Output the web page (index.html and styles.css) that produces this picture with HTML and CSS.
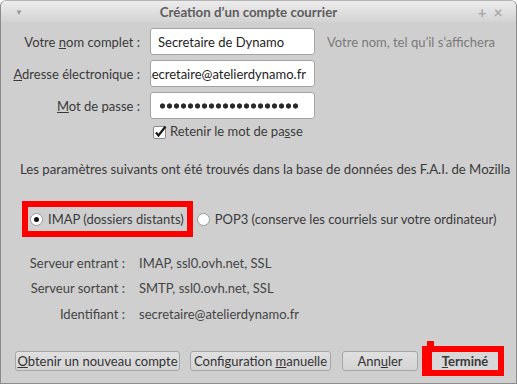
FILE: index.html
```html
<!DOCTYPE html>
<html lang="fr">
<head>
    <meta charset="UTF-8">
    <title>Création d’un compte courrier</title>
    <link rel="stylesheet" href="styles.css">
</head>
<body>
    <div class="window">
        <!-- Title bar -->
        <div class="titlebar">
            <span class="menu-arrow">&#9660;</span>
            <span class="title">Création d’un compte courrier</span>
            <span class="win-btn">+</span>
            <span class="win-btn">&#215;</span>
        </div>

        <div class="content">
            <!-- Identity fields -->
            <div class="fields">
                <label>Votre <u>n</u>om complet :</label>
                <div class="field">Secretaire de Dynamo</div>
                <span class="hint">Votre nom, tel qu’il s’affichera</span>

                <label><u>A</u>dresse électronique :</label>
                <div class="field field-scrolled"><span>secretaire@atelierdynamo.fr</span></div>
                <span></span>

                <label><u>M</u>ot de passe :</label>
                <div class="field"><span class="dots"></span></div>
                <span></span>
            </div>

            <div class="remember">
                <svg class="checkbox" width="15" height="15" viewBox="0 0 15 15">
                    <rect x="0.5" y="2.5" width="12" height="12" rx="1.5" fill="#fff" stroke="#8a8a8a"/>
                    <path d="M3 8.5 L5.5 11.5 L12.5 2.5" fill="none" stroke="#1a1a1a" stroke-width="2.2"/>
                </svg>
                <span>Retenir le mot de pa<u>s</u>se</span>
            </div>

            <p class="notice">Les paramètres suivants ont été trouvés dans la base de données des F.A.I. de Mozilla</p>

            <!-- Protocol choice -->
            <div class="protocols">
                <div class="highlight">
                    <span class="radio checked"></span>
                    <span>IMAP (dossiers distants)</span>
                </div>
                <span class="radio"></span>
                <span>POP3 (conserve les courriels sur votre ordinateur)</span>
            </div>

            <!-- Server summary -->
            <div class="servers">
                <span class="key">Serveur entrant :</span>
                <span>IMAP, ssl0.ovh.net, SSL</span>
                <span class="key">Serveur sortant :</span>
                <span>SMTP, ssl0.ovh.net, SSL</span>
                <span class="key">Identifiant :</span>
                <span>secretaire@atelierdynamo.fr</span>
            </div>

            <!-- Dialog buttons -->
            <div class="buttons">
                <button class="btn btn-new"><u>O</u>btenir un nouveau compte</button>
                <button class="btn btn-manual">Configuration <u>m</u>anuelle</button>
                <button class="btn btn-cancel">Ann<u>u</u>ler</button>
                <div class="highlight highlight-done">
                    <button class="btn btn-done"><u>T</u>erminé</button>
                </div>
            </div>
        </div>
    </div>
</body>
</html>
```

FILE: styles.css
```css
/* General Styling */
body {
    margin: 0;
    padding: 0;
    font-family: 'Lato', 'Liberation Sans', sans-serif;
    font-size: 13px;
    color: #3a3a3a;
}

.window {
    width: 517px;
    height: 384px;
    box-sizing: border-box;
    border: 1px solid #8c8c8c;
    border-top-color: #b4b4b4;
    border-radius: 6px 6px 0 0;
    background: #cfcfcf;
    overflow: hidden;
    display: flex;
    flex-direction: column;
}

/* Title bar */
.titlebar {
    height: 21px;
    display: flex;
    align-items: center;
    padding: 0 10px 0 14px;
    background: linear-gradient(#ececec, #d3d3d3);
}

.menu-arrow {
    font-size: 8px;
    color: #9a9a9a;
    width: 28px;
}

.title {
    flex: 1;
    text-align: center;
    font-weight: bold;
    font-size: 13.3px;
    color: #5c5c5c;
    padding-right: 20px;
}

.win-btn {
    width: 16px;
    text-align: center;
    color: #a8a8a8;
    font-size: 15px;
    font-weight: bold;
}

.content {
    flex: 1;
    display: flex;
    flex-direction: column;
}

/* Identity fields */
.fields {
    display: grid;
    grid-template-columns: 139px 165px auto;
    grid-auto-rows: 27px;
    column-gap: 10px;
    row-gap: 5px;
    margin-top: 6px;
    align-items: center;
}

.fields label {
    text-align: right;
}

.field {
    height: 27px;
    box-sizing: border-box;
    background: #fff;
    border: 1px solid #a3a3a3;
    border-radius: 3px;
    padding: 0 3px 0 7px;
    display: flex;
    align-items: center;
    overflow: hidden;
    white-space: nowrap;
    color: #1e1e1e;
}

/* the address is longer than the box: show it scrolled to its end */
.field-scrolled {
    padding-left: 0;
}

.field-scrolled span {
    flex-shrink: 0;
    margin-left: -5px;
}

.dots {
    width: 141px;
    height: 6px;
    margin-left: 1px;
    background: radial-gradient(circle, #2a2a2a 2.3px, transparent 2.9px) 0 0 / 7px 6px repeat-x;
}

.hint {
    color: #7a7a7a;
    padding-left: 2px;
}

.remember {
    display: flex;
    align-items: center;
    height: 18px;
    margin: 3px 0 0 152px;
    gap: 2px;
}

.notice {
    margin: 20px 0 0 19px;
    font-size: 13.2px;
    line-height: 18px;
}

/* Protocol choice */
.protocols {
    display: flex;
    align-items: center;
    margin: 23px 0 0 21px;
}

.highlight {
    border: 6px solid #ff0000;
    height: 24px;
    display: flex;
    align-items: center;
    padding: 0 3px 0 2px;
    margin-right: 4px;
}

.radio {
    width: 11px;
    height: 11px;
    border-radius: 50%;
    border: 1px solid #9a9a9a;
    background: #fff;
    margin-right: 5px;
    position: relative;
}

.radio.checked::after {
    content: "";
    position: absolute;
    left: 3px;
    top: 3px;
    width: 5px;
    height: 5px;
    border-radius: 50%;
    background: #111;
}

/* Server summary */
.servers {
    display: grid;
    grid-template-columns: 124px auto;
    grid-auto-rows: 25.5px;
    column-gap: 14px;
    align-items: center;
    margin-top: 13px;
    color: #444;
}

.servers .key {
    text-align: right;
}

/* Dialog buttons */
.buttons {
    display: flex;
    align-items: center;
    margin: 19px 0 0 14px;
}

.btn {
    font-family: inherit;
    font-size: 13px;
    color: #333;
    height: 20px;
    padding: 0;
    white-space: nowrap;
    text-align: center;
    border: 1px solid #a6a6a6;
    border-radius: 3px;
    background: linear-gradient(#e0e0e0, #d4d4d4);
}

.btn-new {
    width: 165px;
}

.btn-manual {
    width: 141px;
    margin-left: 10px;
}

.btn-cancel {
    width: 76px;
    margin-left: 11px;
}

.highlight-done {
    position: relative;
    height: 18px;
    border-width: 6px 6px 6px 10px;
    padding: 0;
    margin-left: 4px;
}

.highlight-done::before {
    content: "";
    position: absolute;
    left: -5px;
    top: -11px;
    width: 7px;
    height: 5px;
    background: #ff0000;
}

.btn-done {
    width: 66px;
    height: 18px;
    border: none;
    border-radius: 0;
    background: #d8d8d8;
    font-weight: bold;
    color: #3a3a3a;
}
```
